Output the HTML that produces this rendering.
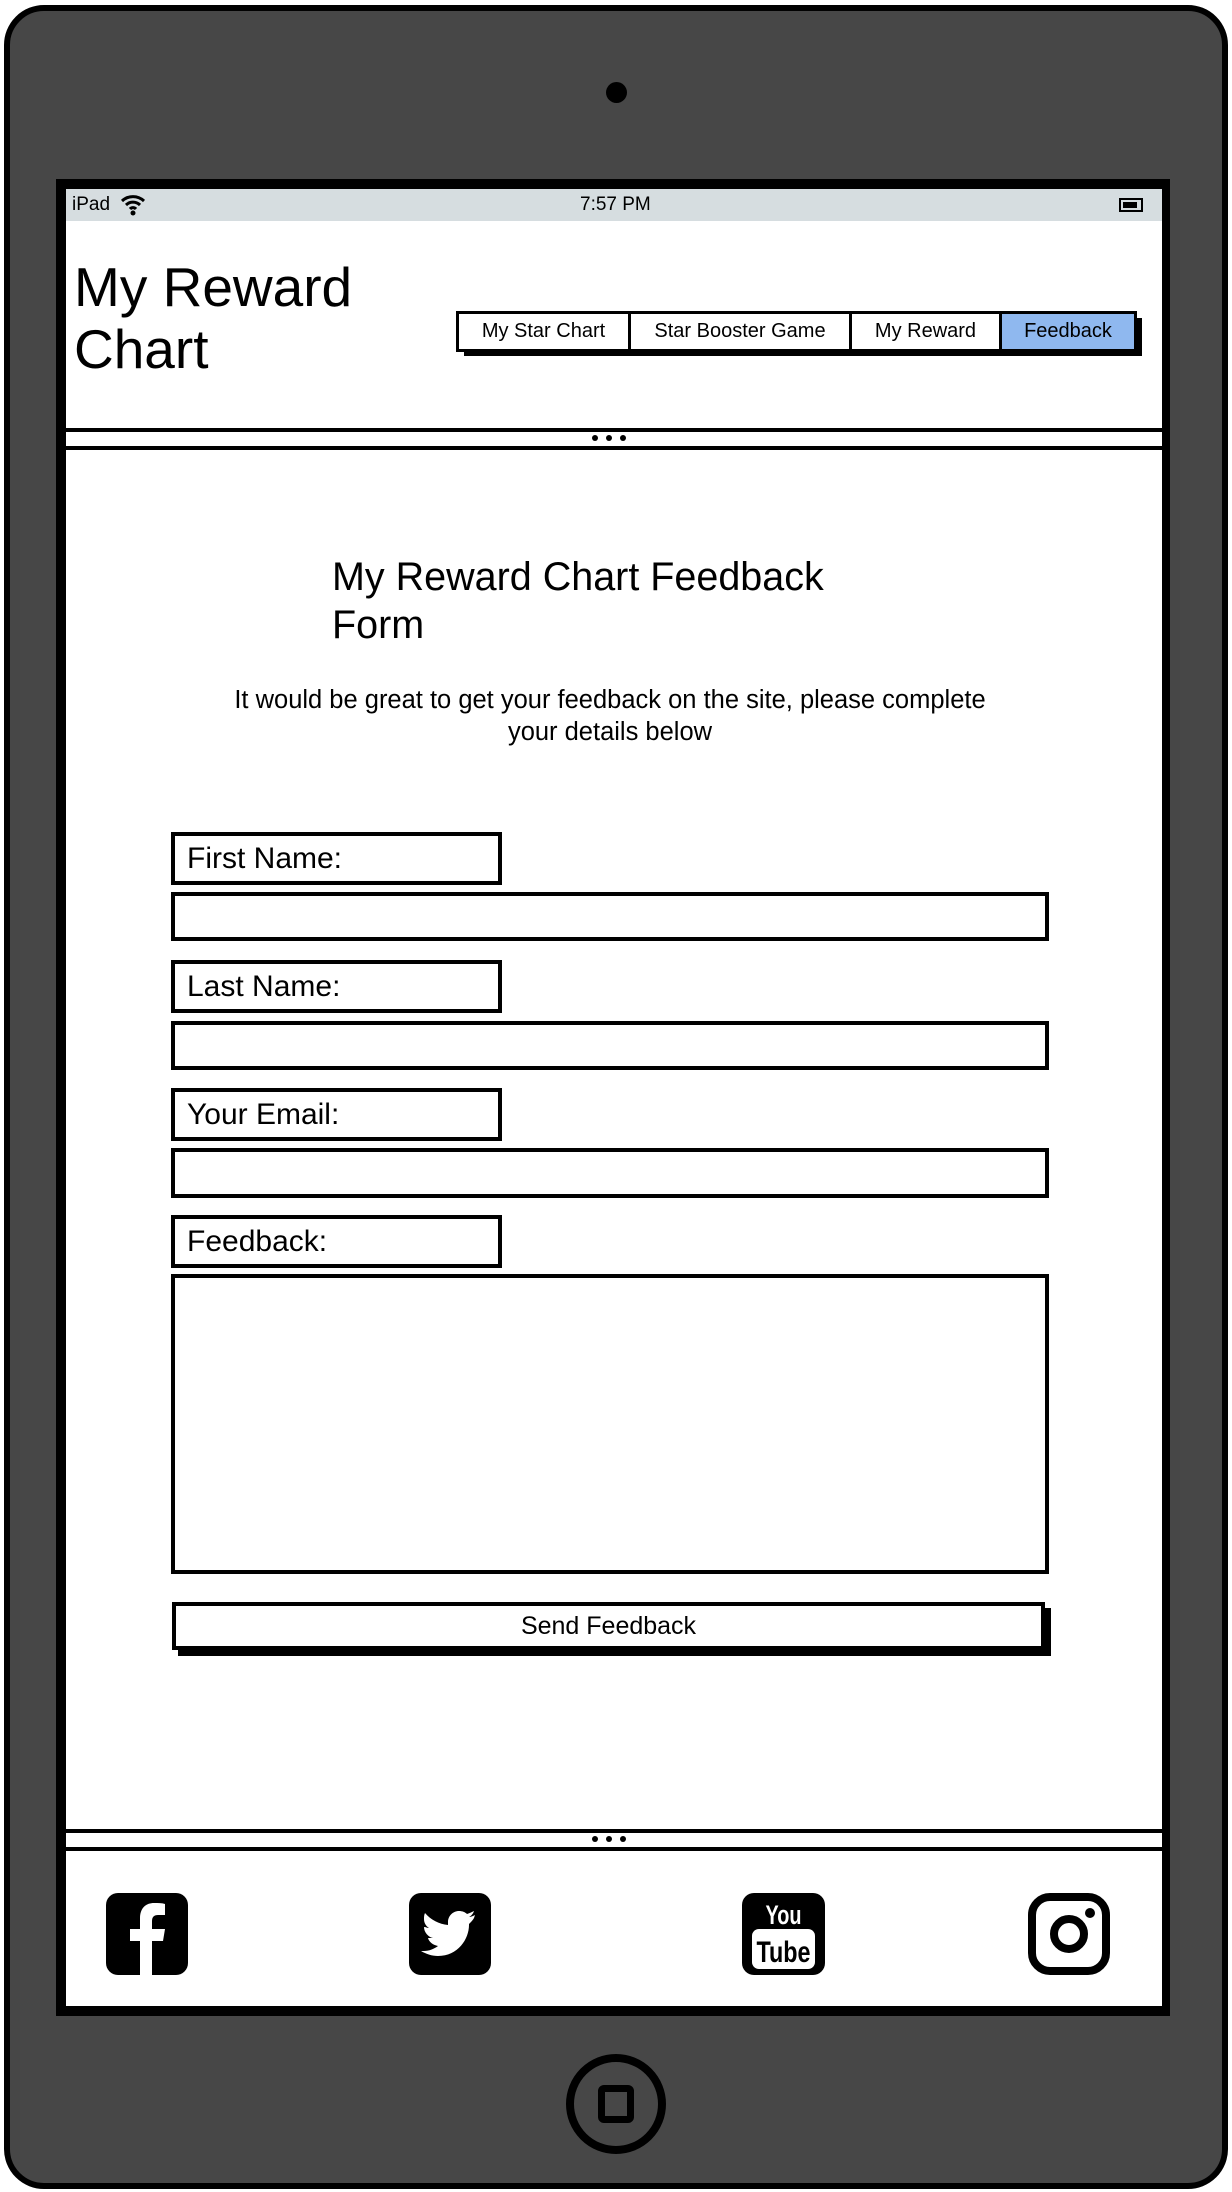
<!DOCTYPE html>
<html><head><meta charset="utf-8"><style>
*{margin:0;padding:0;box-sizing:border-box}
body{width:1232px;height:2192px;background:#fff;position:relative;overflow:hidden;font-family:"Liberation Sans",sans-serif;color:#000}
.a{position:absolute}
.box{position:absolute;border:4px solid #000;background:#fff}
.lbl{font-size:30px;padding-left:12px;line-height:45px}
.dots{position:absolute;left:592px;width:34px;height:6px;display:flex;justify-content:space-between}
.dots i{display:block;width:6px;height:6px;border-radius:50%;background:#000}
</style></head><body>
<div class="a" style="left:4px;top:5px;width:1224px;height:2184px;background:#474747;border:6px solid #000;border-radius:40px"></div>
<div class="a" style="left:606px;top:82px;width:21px;height:21px;border-radius:50%;background:#000"></div>
<div class="a" style="left:56px;top:179px;width:1114px;height:837px;background:#000"></div>
<div class="a" style="left:56px;top:1016px;width:1114px;height:1000px;background:#000"></div>
<div class="a" style="left:66px;top:189px;width:1096px;height:1817px;background:#fff"></div>
<div class="a" style="left:66px;top:189px;width:1096px;height:32px;background:#d6dde0;font-size:19px;line-height:32px">
  <span class="a" style="left:6px">iPad</span>
  <svg class="a" style="left:54px;top:4px" width="26" height="24" viewBox="0 0 26 24"><path d="M2 8 A16 16 0 0 1 24 8 M6 12 A10 10 0 0 1 20 12 M10 16 A4 4 0 0 1 16 16" stroke="#000" stroke-width="3" fill="none"/><circle cx="13" cy="20" r="2.5"/></svg>
  <span class="a" style="left:514px">7:57 PM</span>
  <div class="a" style="left:1053px;top:9px;width:24px;height:14px;border:2px solid #000;padding:2px"><div style="width:14px;height:6px;background:#000"></div></div>
</div>
<div class="a" style="left:74px;top:256px;font-size:55px;line-height:62px">My Reward<br>Chart</div>
<div class="a" style="left:464px;top:318px;width:678px;height:38px;background:#000"></div>
<div class="a" style="left:456px;top:311px;width:681px;height:41px;border:3px solid #000;background:#fff;display:flex;font-size:20px;line-height:35px;text-align:center">
  <div style="width:172px;border-right:3px solid #000">My Star Chart</div>
  <div style="width:221px;border-right:3px solid #000">Star Booster Game</div>
  <div style="width:150px;border-right:3px solid #000">My Reward</div>
  <div style="flex:1;background:#8fb8ef">Feedback</div>
</div>
<div class="a" style="left:66px;top:428px;width:1096px;height:4px;background:#000"></div>
<div class="a" style="left:66px;top:446px;width:1096px;height:4px;background:#000"></div>
<div class="dots" style="top:435px"><i></i><i></i><i></i></div>
<div class="a" style="left:332px;top:553px;font-size:39.5px;line-height:48px">My Reward Chart Feedback<br>Form</div>
<div class="a" style="left:150px;top:684px;width:920px;text-align:center;font-size:25.5px;line-height:32px">It would be great to get your feedback on the site, please complete<br>your details below</div>
<div class="box lbl" style="left:171px;top:832px;width:331px;height:53px">First Name:</div>
<div class="box" style="left:171px;top:892px;width:878px;height:49px"></div>
<div class="box lbl" style="left:171px;top:960px;width:331px;height:53px">Last Name:</div>
<div class="box" style="left:171px;top:1021px;width:878px;height:49px"></div>
<div class="box lbl" style="left:171px;top:1088px;width:331px;height:53px">Your Email:</div>
<div class="box" style="left:171px;top:1148px;width:878px;height:50px"></div>
<div class="box lbl" style="left:171px;top:1215px;width:331px;height:53px">Feedback:</div>
<div class="box" style="left:171px;top:1274px;width:878px;height:300px"></div>
<div class="a" style="left:178px;top:1608px;width:873px;height:48px;background:#000"></div>
<div class="box" style="left:172px;top:1602px;width:873px;height:48px;font-size:25px;text-align:center;line-height:40px">Send Feedback</div>
<div class="a" style="left:66px;top:1829px;width:1096px;height:4px;background:#000"></div>
<div class="a" style="left:66px;top:1847px;width:1096px;height:4px;background:#000"></div>
<div class="dots" style="top:1836px"><i></i><i></i><i></i></div>
<svg class="a" style="left:106px;top:1893px" width="82" height="82" viewBox="0 0 82 82"><rect width="82" height="82" rx="12"/><path d="M46 82V48H57L59 36H46V28C46 24 48 22 52 22H59V11C56 10 52 10 48 10C39 10 34 16 34 25V36H24V48H34V82Z" fill="#fff"/></svg>
<svg class="a" style="left:409px;top:1893px" width="82" height="82" viewBox="0 0 82 82"><rect width="82" height="82" rx="12"/><path d="M66 22c-2 1-4 2-6 2 2-1 4-3 5-6-2 1-4 2-7 3-2-2-5-3-8-3-6 0-11 5-11 11 0 1 0 2 0 3-9-1-17-5-23-12-1 2-1 4-1 6 0 4 2 7 5 9-2 0-3-1-5-1 0 5 4 10 9 11-1 0-2 0-3 0h-2c1 4 5 7 10 8-4 3-9 5-14 5h-3c5 3 11 5 17 5 20 0 31-17 31-31v-1c2-2 4-4 5-6z" fill="#fff"/></svg>
<svg class="a" style="left:742px;top:1893px" width="83" height="82" viewBox="0 0 83 82"><rect width="83" height="82" rx="12"/><rect x="10" y="36" width="63" height="40" rx="7" fill="#fff"/><text x="41.5" y="31" text-anchor="middle" font-family="Liberation Sans Narrow,Liberation Sans,sans-serif" font-weight="bold" font-size="27" fill="#fff" textLength="36" lengthAdjust="spacingAndGlyphs">You</text><text x="41.5" y="69" text-anchor="middle" font-family="Liberation Sans Narrow,Liberation Sans,sans-serif" font-weight="bold" font-size="30" fill="#000" textLength="54" lengthAdjust="spacingAndGlyphs">Tube</text></svg>
<svg class="a" style="left:1028px;top:1893px" width="82" height="82" viewBox="0 0 82 82"><rect x="4" y="4" width="74" height="74" rx="18" fill="none" stroke="#000" stroke-width="8"/><circle cx="41" cy="41" r="15" fill="none" stroke="#000" stroke-width="8"/><circle cx="62" cy="20" r="5"/></svg>
<div class="a" style="left:566px;top:2054px;width:100px;height:100px;border:8px solid #000;border-radius:50%"></div>
<div class="a" style="left:598px;top:2085px;width:36px;height:38px;border:7px solid #000;border-radius:6px"></div>
</body></html>
